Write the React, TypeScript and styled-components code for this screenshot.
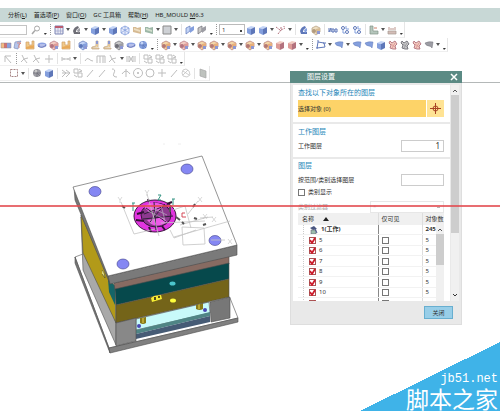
import React from "react";
import styled, { createGlobalStyle } from "styled-components";

const Global = createGlobalStyle`
  * { box-sizing: border-box; }
  body { margin: 0; background: #fff; overflow: hidden; }
  button, input, select, table { font: inherit; color: inherit; }
  button { border: 0; padding: 0; background: none; cursor: pointer; }
  body { font: 6px/10px "Noto Sans", "Noto Sans CJK SC", sans-serif; color: #333; }
`;

const Page = styled.div`
  position: relative;
  display: flex;
  flex-direction: column;
  min-height: 100vh;
  padding-top: 8px;
  overflow: hidden;
`;
const MenuBar = styled.nav`
  display: flex;
  gap: 7px;
  height: 14px;
  align-items: center;
  padding-left: 8px;
  background: #c8d8d6;
`;
const MenuItem = styled.button`
  white-space: nowrap;
  color: #222;
`;
const Toolbars = styled.header`
  border-bottom: 1px solid #b4b8b8;
  padding-bottom: 1px;
`;
const Bar = styled.div<{ $h: number; $start?: number }>`
  display: flex;
  align-items: center;
  width: max-content;
  height: ${(p) => p.$h}px;
  padding-left: ${(p) => p.$start ?? 0}px;
  border-right: 1px solid #e6e6e6;
  border-bottom: 1px solid #efefef;
`;
const ToolButton = styled.button`
  flex: none;
  width: 12px;
  height: 12px;
  opacity: 0.85;
  svg { display: block; }
`;
const ArrowButton = styled.button`
  flex: none;
  display: grid;
  place-items: center;
  width: 6px;
  height: 12px;
  svg { display: block; }
`;
const More = styled(ArrowButton)`
  place-items: end center;
  padding-bottom: 1px;
`;
const Divider = styled.span<{ $grip?: boolean }>`
  flex: none;
  width: 1px;
  height: 11px;
  margin: 0 2px;
  border-left: 1px ${(p) => (p.$grip ? "dotted #999" : "solid #e3e3e3")};
`;
const FindBox = styled.input`
  width: 27px;
  height: 10px;
  margin-right: 3px;
  border: 1px solid #c4c4c4;
  border-left: 0;
`;
const LayerSelect = styled.select`
  width: 26px;
  height: 11px;
  margin: 0;
  padding: 0 2px;
  appearance: none;
  border: 1px solid #bbb;
  background: linear-gradient(#444, #444) 20px 5px / 2px 2px no-repeat #fff;
`;

const shades: Record<string, [string, string, string]> = {
  b: ["#b9cdf5", "#6f8fd8", "#4360ad"],
  o: ["#f3cf9a", "#e3a063", "#a8605c"],
  r: ["#f1c4b8", "#d88a86", "#a65a68"],
  g: ["#c9d9c4", "#8cab98", "#6b8480"],
  t: ["#ead9b8", "#cfae80", "#a58966"],
  k: ["#bfbfbf", "#8d8d95", "#55555f"],
};

function Glyph({ kind, tone }: { kind: string; tone: string }) {
  const [l, m, d] = shades[tone] ?? shades.b;
  const s = { fill: "none", stroke: d, strokeWidth: 1 };
  const faint = { fill: "none", stroke: "#b3b3b3", strokeWidth: 1 };
  const art: Record<string, React.ReactNode> = {
    find: <g fill="none" stroke="#999"><circle cx="7" cy="4.500" r="2.500" /><path d="M5 6.500 2 10" strokeWidth="1.500" /></g>,
    table: <><path d="M2 2h8v8H2z" fill="#e6e6f2" stroke="#6672a8" /><path d="M2 2h8v2H2z" fill="#b04058" /><path d="M2 7h8M5 4v6M7.500 4v6" stroke="#8089b8" strokeWidth=".6" /></>,
    cube: <><path d="M2 4l4-2 4 1-4 2z" fill={l} /><path d="M2 4l4 1v6L2 9z" fill={m} /><path d="M6 5l4-2v6l-4 2z" fill={d} /></>,
    wire: <path d="M2 4l4-2 4 2v5l-4 2-4-2zM2 4l4 2 4-2M6 6v5M2 9l4-3 4 3M6 2v4" fill="#e5eafb" stroke={m} strokeWidth=".8" />,
    part: <><path d="M2 7Q3 3 7 2l1 2Q5 5 5 8h4v2H3z" fill={d} /><path d="M6 6l3-2v3l-2 2z" fill={m} /></>,
    sheet: <><path d="M2 3h3l1 1 4-1v7L6 9 2 8z" fill={m} /><path d="M3 4l6 2v2L3 6z" fill={l} /></>,
    square: <path d="M2 2h8v8H2z" fill="#c6c9ce" stroke="#777" />,
    flag: <><path d="M2 4l4-2v5l-4 3z" fill={l} stroke={d} strokeWidth=".7" /><path d="M6 4l4-2v4L6 9z" fill={m} /></>,
    combo: <><path d="M2 4l4-2 4 2v4l-4 3-4-3z" fill={l} stroke={d} strokeWidth=".7" /><path d="M6 5l4-1v4l-4 2z" fill={m} /><circle cx="4" cy="7" r="2" fill={d} /><path d="M7 7h3v3H7z" fill="#7a86cc" /></>,
    split: <><path d="M1 4h4v5H1z" fill="#efb06c" /><path d="M4 4h3v5H4z" fill="#c55b5b" /><path d="M7 4h4v5H7z" fill="#7490d7" /><path d="M1 4h10v5H1z" fill="none" stroke="#876d78" strokeWidth=".5" /></>,
    fold: <><path d="M3 3l6-1-2 3-1 5-4-1z" fill="#a8bce9" stroke="#6e7dad" strokeWidth=".7" /><path d="M5 4h4l-2 2v3" fill="none" stroke="#d9796f" /></>,
    blocks: <><path d="M2 3h3v3h3V2h2v8H2z" fill="#efc176" stroke="#c8914f" strokeWidth=".7" /><path d="M2 8l8-2v3l-8 1z" fill="#e49b3d" /></>,
    disc: <><ellipse cx="6" cy="6" rx="4.500" ry="2.500" fill="#7892de" /><path d="M4 5h5v3H4z" fill="#a9b4e7" /><path d="M2 7q4 3 8-1" stroke="#5261aa" fill="none" /></>,
    step: <><path d="M2 9h8v1H3V8l4-1V2h2v6" fill="#f2cf91" stroke="#bda078" strokeWidth=".8" /><path d="M7 2h2v3H7z" fill="#7785c9" /></>,
    ball: <><circle cx="6" cy="6" r="4" fill={m} /><path d="M2 6h8M6 2v8M3 3l6 6" stroke={d} strokeWidth=".7" /><circle cx="5" cy="4" r="1.500" fill={l} /></>,
    surf: <path d="M2 4q4-2 8-1L9 9Q8 7 6 7 3 7 2 4z" fill={m} stroke={d} strokeWidth=".5" />,
    plane: <path d="M3 3l6 1 1 4-8 1zM2 2h2M8 4h3M1 9h2" {...s} />,
    gear: <><path d="M3 2l2 2 3-2 2 3-2 2 1 3H6L3 9l1-3-2-2z" fill={l} stroke={d} strokeWidth=".9" /><path d="M4 5l4 3M8 4L5 9" stroke={m} /></>,
    hatch: <path d="M3 3l3-1 3 2 1 4-3 2-4-1-1-3zM3 4l6 4M3 8l5-5" fill="none" stroke="#b8b8b8" strokeWidth=".8" />,
    axes: <path d="M3 10l3-4V2M6 6l4-2M1 3l4 3M9 2v1" {...s} strokeDasharray="2 1" />,
    dots: <><circle cx="4" cy="4" r="1.500" {...s} /><circle cx="8" cy="8" r="1.500" {...s} /><path d="M4 6v3h2M7 2v3h3" stroke={m} fill="none" /></>,
    meas: <path d="M2 4v4l2-4v4M5 5h2v3H5zM8 5h2v3H8z" {...s} />,
    rule: <><path d="M2 7h8v3H2z" fill="#ccb2ab" stroke="#97877e" strokeWidth=".7" /><path d="M3 3v3M5 4v2M7 4v2M9 3v3" stroke="#b2857d" /></>,
    level: <><path d="M2 2h3v5h5v3H2z" fill="#a9bdb1" stroke="#6f8174" strokeWidth=".7" /><path d="M6 4h3" stroke="#c36a50" /></>,
    select: <path d="M2.500 2.500h7v7h-7z" fill="none" stroke="#987171" strokeDasharray="2 1" />,
    corner: <path d="M3 9V3h6M3 3l6 7" {...faint} />,
    trim: <path d="M3 2l2 4-3 3M5 6l4-1M5 6l3 4" {...faint} />,
    plus: <path d="M6 2v8M2 6h8" {...faint} />,
    dim: <path d="M2 4v4M10 4v4M2 6h8M4 5v2M8 5v2" {...faint} />,
    wave: <path d="M2 8q2-4 4-2t4 2" {...faint} />,
    frame: <path d="M2 10V3h8v7M5 3v7M8 3v7" {...faint} />,
    mirror: <path d="M2 3v6M10 3v6M4 3l4 6V3L4 9z" {...faint} />,
    grid: <path d="M2 2h4v4H2zM6 6h4v4H6zM7 2l3 2-3 1M2 8l3 2" {...faint} />,
    line: <path d="M3 10L9 3" {...faint} />,
    curve: <path d="M4 2q4 0 2 4t3 4" {...faint} />,
    arc: <path d="M2 7q4-6 8 0M6 2v8" {...faint} />,
    circle: <circle cx="6" cy="6" r="4" {...faint} />,
    center: <><circle cx="6" cy="6" r="4.500" {...faint} /><circle cx="6" cy="6" r="1" fill="#aaa" /></>,
    web: <path d="M2 3l4 3-4 4M6 3l4 3-4 4M2 6h8" {...faint} />,
    slab: <path d="M3 2l6 2v7L3 9z" fill="#b3b8b3" stroke="#999" strokeWidth=".7" />,
  };
  return <svg width="12" height="12" viewBox="0 0 12 12" aria-hidden="true">{art[kind]}</svg>;
}

/* "v" opens a drop-down, "." is the overflow button, "|" a divider, "!" a grip. */
function Tools({ items }: { items: string }) {
  return (
    <>
      {items.split(" ").map((t, i) => {
        if (t === "v")
          return (
            <ArrowButton key={i} aria-label="展开">
              <svg width="4" height="3"><path d="M0 0h4L2 3z" fill="#555" /></svg>
            </ArrowButton>
          );
        if (t === ".")
          return (
            <More key={i} aria-label="更多">
              <svg width="3" height="2"><path d="M0 0h3L1 2z" fill="#333" /></svg>
            </More>
          );
        if (t === "|" || t === "!") return <Divider key={i} $grip={t === "!"} />;
        const [kind, tone = "b"] = t.split(":");
        return <ToolButton key={i} aria-label={kind}><Glyph kind={kind} tone={tone} /></ToolButton>;
      })}
    </>
  );
}

const Canvas = styled.main`
  position: relative;
  flex: 1;
`;
const Drawing = styled.svg`
  display: block;
`;

function Mold() {
  const e = { stroke: "#4d4d4d", strokeWidth: 0.6 };
  return (
    <Drawing width="260" height="300" viewBox="0 83 260 300" aria-label="模架">
      <path d="M75 257l8-3 147 44 8 20-129 30z" fill="#fff" {...e} />
      <path d="M75 257l34 91 1 5-35-90z" fill="#777" {...e} />
      <path d="M109 348l129-30v4l-128 31z" fill="#808080" {...e} />
      <path d="M136 319l73-17 1 11-74 17z" fill="#c8fafa" {...e} />
      <path d="M136 330l74-18v4l-74 18z" fill="#4f8585" />
      <path d="M136 334l74-18v6l-74 17z" fill="#465b75" />
      <path d="M140 318l6-1v6q-3 2-6 0zM196 305l7-2v6q-3 2-7 0z" fill="#887a17" />
      <path d="M142 318h2v5h-2zM198 304h2v5h-2z" fill="#b8a631" />
      <circle cx="139" cy="326" r="2" fill="#4949b4" /><circle cx="205" cy="310" r="2" fill="#4949b4" />
      <path d="M81 217l35 106v22l-33-75z" fill="#a9a9a9" {...e} />
      <path d="M81 215l29 65 5 6 1 37-33-70z" fill="#b29a19" {...e} />
      <path d="M108 279l7 7v19l-6-13z" fill="#146568" />
      <path d="M102 270q3 2 3 8l-3-4" fill="#ded77a" stroke="#494926" strokeWidth=".6" />
      <path d="M114 283l115-27v8l-114 26z" fill="#876b62" {...e} />
      <path d="M115 289l114-26v16l-113 26z" fill="#06494c" {...e} />
      <path d="M116 305l113-26v18l-113 26z" fill="#746419" {...e} />
      <path d="M116 323l20-5v23l-20 5z" fill="#888" {...e} />
      <path d="M210 302l20-5v21l-19 4z" fill="#777" {...e} />
      <path d="M74 187l34 89 2 8-35-84z" fill="#777" {...e} />
      <path d="M108 276l129-31v10l-127 29z" fill="#7a7a7a" {...e} />
      <path d="M73 187l129-31 35 89-129 31z" fill="#fff" {...e} />
      <g fill="#8587f3" stroke="#424288" strokeWidth=".6">
        <ellipse cx="95" cy="191.500" rx="6" ry="5" /><ellipse cx="187" cy="169" rx="6" ry="5" />
        <ellipse cx="215" cy="240.500" rx="6" ry="5" /><ellipse cx="123" cy="264" rx="6" ry="5" />
      </g>
      <ellipse cx="172.500" cy="283.500" rx="3" ry="2" fill="#4bc5cc" />
      <ellipse cx="173" cy="300.500" rx="3" ry="2" fill="#ffff3c" />
      <path d="M151 298l3-2 7-1 1 4-10 3z" fill="#f5ed35" /><path d="M154 297h2v3h-2zM158 296h2v2h-2z" fill="#554d18" />
      <ellipse cx="155" cy="216" rx="21" ry="16" fill="#e035df" stroke="#401642" />
      <ellipse cx="156" cy="215" rx="15" ry="12" fill="#8d398f" stroke="#35123a" />
      <path d="M144 207q7-8 20-2l-4 5-11 2zM147 220q8 10 20 2l-4-5-9 2z" fill="#ee59e8" />
      <path d="M137 214l7-2M136 220l8 1M149 227l2 5M162 226l3 4M167 204l5-2M149 202l-1-3" stroke="#321235" strokeWidth="2" />
      <path d="M144 214l23-9M146 208l20 14M150 222l15-18M154 202l2 28M143 219l30-3" stroke="#30203a" />
      <path d="M148 211l16 8M157 206l-6 18M150 207l17 8M161 205l4 16" stroke="#b4a0bb" strokeWidth=".8" />
      <g fill="none" stroke="#c4c4c4" strokeWidth=".8">
        <path d="M121 202l13 32 21-5M147 194l12 42M174 237l56-16M180 225l28-8M182 227l1 18 22-1-1-16zM170 230l4 8 22-8M173 210l12-4 6 22M188 214l10-13M200 218l13-1M211 240h14M161 223l44-2" />
      </g>
      <g fill="none" stroke="#c0c0c0" strokeWidth=".6">
        <path d="M118 197l2 3 2-3M120 200v3M145 190l2 3 2-3M147 193v3M198 197l4 5m0-5-4 5M203 214l4 5m0-5-4 5M212 217l4 5m0-5-4 5M228 239l4 5m0-5-4 5" />
      </g>
      <path d="M158 195h3l-3 5h3M172 199h3M173 199v6M132 203h3M133 203v8" fill="none" stroke="#359483" />
      <path d="M185 213h-3v4h4" fill="none" stroke="#d44a58" />
      <path d="M122 206l3 2M193 207l2-3M194 218l3 1M203 225l3-1M182 222l2 2M176 217l4 3M170 206v6" stroke="#555" strokeWidth="2" />
      <path d="M163 144h2M178 144h3" stroke="#eee" />
    </Drawing>
  );
}

const Dialog = styled.section`
  position: absolute;
  left: 290px;
  top: -12px;
  width: 172px;
  border: 1px solid #dedede;
  border-top: 0;
  background: #e9e9e9;
`;
const TitleBar = styled.header`
  display: flex;
  align-items: center;
  justify-content: space-between;
  height: 12px;
  margin: 0 -1px;
  padding: 0 4px 0 17px;
  background: #5b8a84;
  color: #fff;
  font-size: 7px;
  button { height: 8px; }
  svg { display: block; }
`;
const Body = styled.div`
  display: flex;
  gap: 1px;
  padding: 2px 2px 0;
`;
const Sections = styled.div`
  display: flex;
  flex: 1;
  flex-direction: column;
  gap: 2px;
`;
const Section = styled.div`
  padding: 2px 6px 5px 5px;
  background: #fff;
`;
const LastSection = styled(Section)`
  padding: 1px 6px 0 5px;
`;
const Heading = styled.h2`
  margin: 0;
  font-size: 7px;
  line-height: 11px;
  font-weight: 400;
  color: #2585b8;
`;
const PickRow = styled.div`
  display: flex;
  gap: 1px;
  height: 17px;
  margin-top: 2px;
`;
const Pick = styled.button<{ $icon?: boolean }>`
  flex: ${(p) => (p.$icon ? "0 0 17px" : "1")};
  display: grid;
  align-items: center;
  justify-items: ${(p) => (p.$icon ? "center" : "start")};
  background: ${(p) => (p.$icon ? "#ffe394" : "#fdd368")};
`;
const Field = styled.label<{ $dim?: boolean }>`
  display: flex;
  align-items: center;
  justify-content: space-between;
  height: 13px;
  margin-top: 2px;
  color: ${(p) => (p.$dim ? "#aaa" : "inherit")};
`;
const NumberBox = styled.input`
  width: 43px;
  height: 12px;
  padding: 0 3px;
  border: 1px solid #ccc;
  text-align: right;
  font-size: 8px;
`;
const FilterSelect = styled.select`
  width: 74px;
  height: 12px;
  appearance: none;
  border: 1px solid #ddd;
  padding: 0 2px;
  background: linear-gradient(#999, #999) 66px 5px / 3px 1px no-repeat #fff;
`;
const CheckLine = styled.label`
  display: flex;
  align-items: center;
  gap: 3px;
  height: 12px;
`;
const Check = styled.input`
  appearance: none;
  display: block;
  flex: none;
  width: 7px;
  height: 7px;
  margin: 0;
  border: 1px solid #777;
  background: #fff;
`;
const RedCheck = styled.span`
  display: grid;
  width: 7px;
  height: 7px;
  input, svg { grid-area: 1 / 1; }
  input { border-color: #a55; }
  svg { pointer-events: none; }
`;
const TableFrame = styled.div`
  position: relative;
  height: 88px;
  overflow: hidden;
`;
const LayerTable = styled.table`
  width: 100%;
  height: 96px;
  table-layout: fixed;
  border-collapse: collapse;
  line-height: 9px;
  th, td { padding: 0 0 0 3px; text-align: left; font-weight: 400; white-space: nowrap; }
  th { height: 12px; background: #f0f0f0; border-right: 1px solid #ddd; }
  td { border-bottom: 1px solid #f2f2f2; border-right: 1px solid #ddd; }
  th:last-child, td:last-child { border-right: 0; }
  td:first-child { border-right: 1px solid #888; }
  tbody tr:first-child td { font-weight: 700; }
`;
const NameCol = styled.col`width: 80px;`;
const VisibleCol = styled.col`width: 44px;`;
const NameCell = styled.div`
  display: flex;
  align-items: center;
  gap: 3px;
  margin-left: 2px;
  padding-left: 5px;
  border-left: 1px dotted #ccc;
`;
const HeadCell = styled.div`
  display: flex;
  align-items: center;
  gap: 9px;
  padding-left: 1px;
`;
const Scroll = styled.div<{ $inner?: boolean; $thumb: number }>`
  display: flex;
  flex-direction: column;
  justify-content: space-between;
  align-items: center;
  width: 8px;
  padding: 4px 0;
  background: #f0f0f0;
  ${(p) => p.$inner && "position: absolute; right: 0; top: 12px; bottom: 0; padding: 3px 0;"}
  &::before {
    content: "";
    order: 1;
    width: 100%;
    height: ${(p) => p.$thumb}px;
    margin: 3px 0 auto;
    background: #cdcdcd;
  }
  svg:first-of-type { order: 0; }
  svg:last-of-type { order: ${(p) => (p.$inner ? 0 : 2)}; }
`;
const Footer = styled.footer`
  display: flex;
  justify-content: flex-end;
  padding: 5px 8px 5px;
`;
const CloseButton = styled.button`
  width: 29px;
  height: 13px;
  border: 1px solid #68afd0;
  background: #98cee8;
`;

function LayerDialog() {
  return (
    <Dialog aria-label="图层设置">
      <TitleBar>
        <span>图层设置</span>
        <button aria-label="关闭"><svg width="8" height="8"><path d="M1 1l6 6M7 1L1 7" stroke="#fff" strokeWidth="1.500" /></svg></button>
      </TitleBar>
      <Body>
        <Sections>
          <Section>
            <Heading>查找以下对象所在的图层</Heading>
            <PickRow>
              <Pick>选择对象 (0)</Pick>
              <Pick $icon aria-label="选择对象">
                <svg width="11" height="11"><path d="M5.500 0v11M0 5.500h11" stroke="#a84324" /><circle cx="5.500" cy="5.500" r="2.500" fill="none" stroke="#a84324" /></svg>
              </Pick>
            </PickRow>
          </Section>
          <Section>
            <Heading>工作图层</Heading>
            <Field>工作图层<NumberBox defaultValue="1" /></Field>
          </Section>
          <LastSection>
            <Heading>图层</Heading>
            <Field>按范围/类别选择图层<NumberBox /></Field>
            <CheckLine><Check type="checkbox" />类别显示</CheckLine>
            <Field $dim>类别过滤器<FilterSelect disabled><option>*</option></FilterSelect></Field>
            <TableFrame>
              <LayerTable>
                <colgroup><NameCol /><VisibleCol /><col /></colgroup>
                <thead>
                  <tr>
                    <th><HeadCell>名称<svg width="6" height="4"><path d="M0 4l3-4 3 4z" fill="#222" /></svg></HeadCell></th>
                    <th>仅可见</th>
                    <th>对象数</th>
                  </tr>
                </thead>
                <tbody>
                  <tr>
                    <td>
                      <NameCell>
                        <svg width="9" height="8"><path d="M1 2l4-2 3 3-4 1z" fill="#4a5680" /><path d="M2 4h5v4H2z" fill="#9bbdac" stroke="#667" strokeWidth=".6" /><path d="M6 3l2 4" stroke="#46528c" /></svg>
                        1(工作)
                      </NameCell>
                    </td>
                    <td />
                    <td>245</td>
                  </tr>
                  {[5, 6, 7, 8, 9, 10, 11].map((n) => (
                    <tr key={n}>
                      <td>
                        <NameCell>
                          <RedCheck>
                            <Check type="checkbox" defaultChecked aria-label={`图层 ${n}`} />
                            <svg width="7" height="7"><path d="M1 3l2 3 3-5" fill="none" stroke="#cc1c2c" strokeWidth="1.800" /></svg>
                          </RedCheck>
                          {n}
                        </NameCell>
                      </td>
                      <td><Check type="checkbox" aria-label={`图层 ${n} 仅可见`} /></td>
                      <td>5</td>
                    </tr>
                  ))}
                </tbody>
              </LayerTable>
              <Scroll $inner $thumb={31}><svg width="5" height="3"><path d="M0 3l2-2 2 2" fill="none" stroke="#555" /></svg></Scroll>
            </TableFrame>
          </LastSection>
        </Sections>
        <Scroll $thumb={138}>
          <svg width="5" height="3"><path d="M0 3l2-2 2 2" fill="none" stroke="#555" /></svg>
          <svg width="5" height="3"><path d="M0 0l2 2 2-2" fill="none" stroke="#333" /></svg>
        </Scroll>
      </Body>
      <Footer><CloseButton>关闭</CloseButton></Footer>
    </Dialog>
  );
}

const RedLine = styled.div`
  position: absolute;
  left: 0;
  right: 0;
  top: 205px;
  height: 2px;
  background: #e2484dcc;
  pointer-events: none;
`;
const Watermark = styled.div`
  position: absolute;
  right: 0;
  bottom: 0;
  width: 140px;
  height: 69px;
  padding: 30px 2px 0 0;
  background: linear-gradient(to bottom right, transparent 50%, #3fb3e8 50%);
  color: #fff;
  text-align: right;
`;
const Site = styled.div`
  font: 12px/14px "Liberation Mono", monospace;
`;
const SiteName = styled.div`
  font: 23px/24px "Noto Sans CJK SC", sans-serif;
`;

/* Menu titles, split around the underlined access key. */
const menus = [
  ["分析(", "L", ")"],
  ["首选项(", "P", ")"],
  ["窗口(", "O", ")"],
  ["GC 工具箱", "", ""],
  ["帮助(", "H", ")"],
  ["HB_MOULD ", "M", "6.3"],
];

export default function App() {
  return (
    <Page>
      <Global />
      <MenuBar>
        {menus.map(([before, key, after]) => <MenuItem key={before}>{before}{key && <u>{key}</u>}{after}</MenuItem>)}
      </MenuBar>
      <Toolbars>
        <Bar $h={16}>
          <FindBox aria-label="查找" />
          <Tools items="find . ! table v part:k v cube v cube wire sheet:t sheet:g v square v | flag flag:k . !" />
          <LayerSelect aria-label="工作图层"><option>1</option></LayerSelect>
          <Tools items="cube cube v axes:r v | part combo:t | meas dots dots | level v rule ." />
        </Bar>
        <Bar $h={14}>
          <Tools items="split fold blocks disc combo:r blocks | combo step step combo:k disc ball . ! combo:o v combo:r v combo:o combo:o v combo:o v combo:o v combo:o cube:r cube:r v . ! plane v surf v surf surf cube gear:r gear:k gear:r surf:k v ." />
        </Bar>
        <Bar $h={14} $start={2}>
          <Tools items="corner ! trim trim plus | dim v | wave frame trim v mirror | grid grid grid ." />
        </Bar>
        <Bar $h={15} $start={8}>
          <Tools items="select v | ball:k cube | web grid line line curve arc center circle plus line hatch | slab" />
        </Bar>
      </Toolbars>
      <Canvas>
        <Mold />
        <LayerDialog />
      </Canvas>
      <Watermark><Site>jb51.net</Site><SiteName>脚本之家</SiteName></Watermark>
      <RedLine />
    </Page>
  );
}
